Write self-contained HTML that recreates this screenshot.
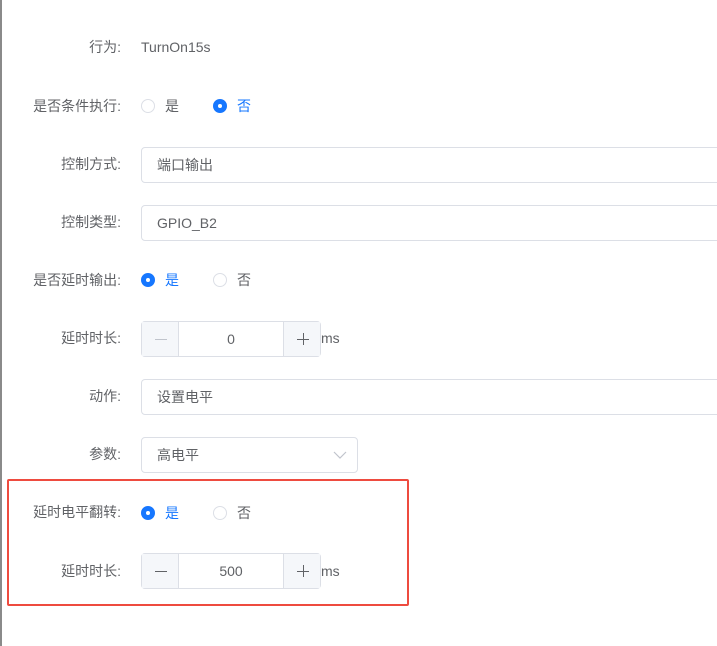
<!DOCTYPE html>
<html><head><meta charset="utf-8"><style>
*{margin:0;padding:0;box-sizing:border-box}
body{width:717px;height:646px;background:#fff;position:relative;overflow:hidden;font-family:"Liberation Sans","Noto Sans CJK SC",sans-serif;font-size:14px;color:#606266}
.edge{position:absolute;left:0;top:0;width:2px;height:646px;background:#8a8a8a}
.lbl{position:absolute;right:596px;width:140px;text-align:right;line-height:20px;color:#606266}
.v{position:absolute;line-height:20px}
.inp{position:absolute;left:141px;height:36px;border:1px solid #dcdfe6;border-radius:4px;line-height:34px;padding-left:15px;color:#606266}
.full{width:600px}
.r{position:absolute;width:14px;height:14px;border-radius:50%;border:1px solid #dcdfe6;background:#fff}
.r.on{border-color:#1677ff;background:#1677ff}
.r.on:after{content:"";position:absolute;left:4px;top:4px;width:4px;height:4px;border-radius:50%;background:#fff}
.rt{position:absolute;line-height:20px;color:#606266}
.rt.on{color:#1677ff}
.num{position:absolute;left:141px;width:180px;height:36px;border:1px solid #dcdfe6;border-radius:4px;text-align:center;line-height:34px;color:#606266}
.btn{position:absolute;top:0;width:37px;height:34px;background:#f5f7fa}
.btn svg{position:absolute;left:12px;top:10px}
.ms{position:absolute;left:321px;line-height:20px}
.box{position:absolute;left:7px;top:479px;width:402px;height:127px;border:2px solid #ee4b3f;border-radius:2px}
</style></head><body>
<div class="edge"></div>
<div class="lbl" style="top:37px">行为:</div><div class="v" style="left:141px;top:37px">TurnOn15s</div>

<div class="lbl" style="top:96px">是否条件执行:</div>
<div class="r" style="left:141px;top:99px"></div><div class="rt" style="left:165px;top:96px">是</div>
<div class="r on" style="left:213px;top:99px"></div><div class="rt on" style="left:237px;top:96px">否</div>

<div class="lbl" style="top:154px">控制方式:</div><div class="inp full" style="top:147px">端口输出</div>
<div class="lbl" style="top:212px">控制类型:</div><div class="inp full" style="top:205px">GPIO_B2</div>

<div class="lbl" style="top:270px">是否延时输出:</div>
<div class="r on" style="left:141px;top:273px"></div><div class="rt on" style="left:165px;top:270px">是</div>
<div class="r" style="left:213px;top:273px"></div><div class="rt" style="left:237px;top:270px">否</div>

<div class="lbl" style="top:328px">延时时长:</div>
<div class="num" style="top:321px"><div class="btn" style="left:0;border-right:1px solid #dcdfe6"><svg width="14" height="14"><path d="M1 7.5h12" stroke="#c0c4cc" stroke-width="1"/></svg></div>0<div class="btn" style="right:0;border-left:1px solid #dcdfe6"><svg width="14" height="14"><path d="M1 7.5h12M7.5 1v12" stroke="#606266" stroke-width="1"/></svg></div></div>
<div class="ms" style="top:328px">ms</div>

<div class="lbl" style="top:386px">动作:</div><div class="inp full" style="top:379px">设置电平</div>
<div class="lbl" style="top:444px">参数:</div><div class="inp" style="top:437px;width:217px">高电平<svg style="position:absolute;right:10px;top:13px" width="14" height="8" viewBox="0 0 14 8"><path d="M1 1l6 6 6-6" fill="none" stroke="#c0c4cc" stroke-width="1.2"/></svg></div>

<div class="box"></div>
<div class="lbl" style="top:502px">延时电平翻转:</div>
<div class="r on" style="left:141px;top:506px"></div><div class="rt on" style="left:165px;top:503px">是</div>
<div class="r" style="left:213px;top:506px"></div><div class="rt" style="left:237px;top:503px">否</div>

<div class="lbl" style="top:561px">延时时长:</div>
<div class="num" style="top:553px"><div class="btn" style="left:0;border-right:1px solid #dcdfe6"><svg width="14" height="14"><path d="M1 7.5h12" stroke="#606266" stroke-width="1"/></svg></div>500<div class="btn" style="right:0;border-left:1px solid #dcdfe6"><svg width="14" height="14"><path d="M1 7.5h12M7.5 1v12" stroke="#606266" stroke-width="1"/></svg></div></div>
<div class="ms" style="top:561px">ms</div>
</body></html>
